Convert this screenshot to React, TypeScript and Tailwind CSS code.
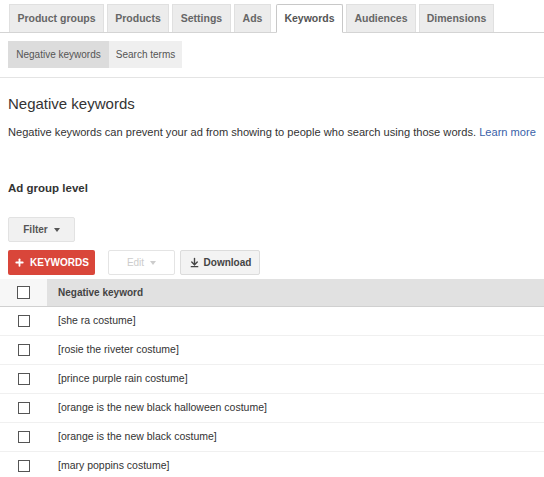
import { Plus, ArrowDownToLine } from 'lucide-react';

const tabs = [
  { label: 'Product groups', w: 'w-[95px]' },
  { label: 'Products', w: 'w-[62px]' },
  { label: 'Settings', w: 'w-[59px]' },
  { label: 'Ads', w: 'w-[37px]' },
  { label: 'Keywords', w: 'w-[67px]' },
  { label: 'Audiences', w: 'w-[70px]' },
  { label: 'Dimensions', w: 'w-[75px]' },
];

const keywords = [
  '[she ra costume]',
  '[rosie the riveter costume]',
  '[prince purple rain costume]',
  '[orange is the new black halloween costume]',
  '[orange is the new black costume]',
  '[mary poppins costume]',
];

function Caret() {
  return <span className="inline-block w-0 h-0 border-l-[3px] border-r-[3px] border-t-[4px] border-l-transparent border-r-transparent border-t-current ml-1.5" />;
}

export default function App() {
  return (
    <div className="w-[544px] h-[477px] overflow-hidden bg-white text-[#222] font-['Liberation_Sans',Arial,sans-serif]">
      {/* main tabs */}
      <div className="flex items-end gap-[3px] pl-[9px] pt-[4px] border-b border-[#d4d4d4] h-[33px]">
        {tabs.map((t) => (
          <div
            key={t.label}
            className={
              t.label === 'Keywords'
                ? `${t.w} h-[29px] ml-[2px] flex items-center justify-center whitespace-nowrap bg-white border border-[#c8c8c8] border-b-white -mb-px rounded-t-[2px] text-[10.5px] font-bold text-[#555]`
                : `${t.w} h-[28px] flex items-center justify-center whitespace-nowrap bg-[#ececec] border border-[#e0e0e0] border-b-0 text-[10.5px] font-bold text-[#666]`
            }
          >
            {t.label}
          </div>
        ))}
      </div>

      {/* sub tabs */}
      <div className="flex pl-[8px] mt-[8px]">
        <div className="w-[101px] h-[27px] flex items-center justify-center bg-[#dcdcdc] text-[10px] text-[#555] whitespace-nowrap">Negative keywords</div>
        <div className="w-[73px] h-[27px] flex items-center justify-center bg-[#efefef] text-[10px] text-[#555] whitespace-nowrap">Search terms</div>
      </div>
      <div className="mt-[9px] border-b border-[#e4e4e4]" />

      {/* heading */}
      <div className="pl-[8px] pt-[16px] text-[15px] text-[#333] leading-[20px]">Negative keywords</div>
      <div className="pl-[8px] pt-[11px] text-[11.1px] text-[#333] leading-[14px] whitespace-nowrap">
        Negative keywords can prevent your ad from showing to people who search using those words.{' '}
        <span className="text-[#3a5fa8]">Learn more</span>
      </div>

      <div className="pl-[8px] pt-[41px] text-[11.5px] font-bold text-[#333]">Ad group level</div>

      {/* filter */}
      <div className="pl-[8px] mt-[20px]">
        <div className="w-[67px] h-[25px] flex items-center justify-center bg-[#f1f1f1] border border-[#e2e2e2] rounded-[2px] text-[10px] font-bold text-[#555]">
          Filter
          <Caret />
        </div>
      </div>

      {/* action buttons */}
      <div className="flex items-center pl-[8px] mt-[8px] gap-[5px]">
        <div className="w-[87px] h-[25px] flex items-center justify-center gap-[5px] bg-[#d9463a] rounded-[2px] text-[10px] font-bold text-white">
          <Plus size={11} strokeWidth={4} />
          KEYWORDS
        </div>
        <div className="ml-[8px] w-[67px] h-[25px] flex items-center justify-center bg-white border border-[#e4e4e4] rounded-[2px] text-[10px] text-[#ccc]">
          Edit
          <Caret />
        </div>
        <div className="w-[80px] h-[25px] flex items-center justify-center gap-[4px] bg-[#f3f3f3] border border-[#dcdcdc] rounded-[2px] text-[10px] font-bold text-[#444]">
          <ArrowDownToLine size={11} strokeWidth={3} />
          Download
        </div>
      </div>

      {/* table */}
      <div className="mt-[4px]">
        <div className="flex h-[28px] items-center border-b border-[#d0d0d0]">
          <div className="w-[47px] h-full flex items-center justify-center bg-[#f7f7f7]">
            <span className="block w-[13px] h-[13px] border border-[#555] bg-white" />
          </div>
          <div className="flex-1 h-full flex items-center pl-[11px] bg-[#e1e1e1] text-[10px] font-bold text-[#444]">
            Negative keyword
          </div>
        </div>
        {keywords.map((k) => (
          <div key={k} className="flex h-[29px] items-center border-b border-[#f0f0f0]">
            <div className="w-[47px] flex items-center justify-center">
              <span className="block w-[12px] h-[12px] border border-[#555] bg-white" />
            </div>
            <div className="pl-[11px] text-[10.5px] text-[#333]">{k}</div>
          </div>
        ))}
      </div>
    </div>
  );
}
